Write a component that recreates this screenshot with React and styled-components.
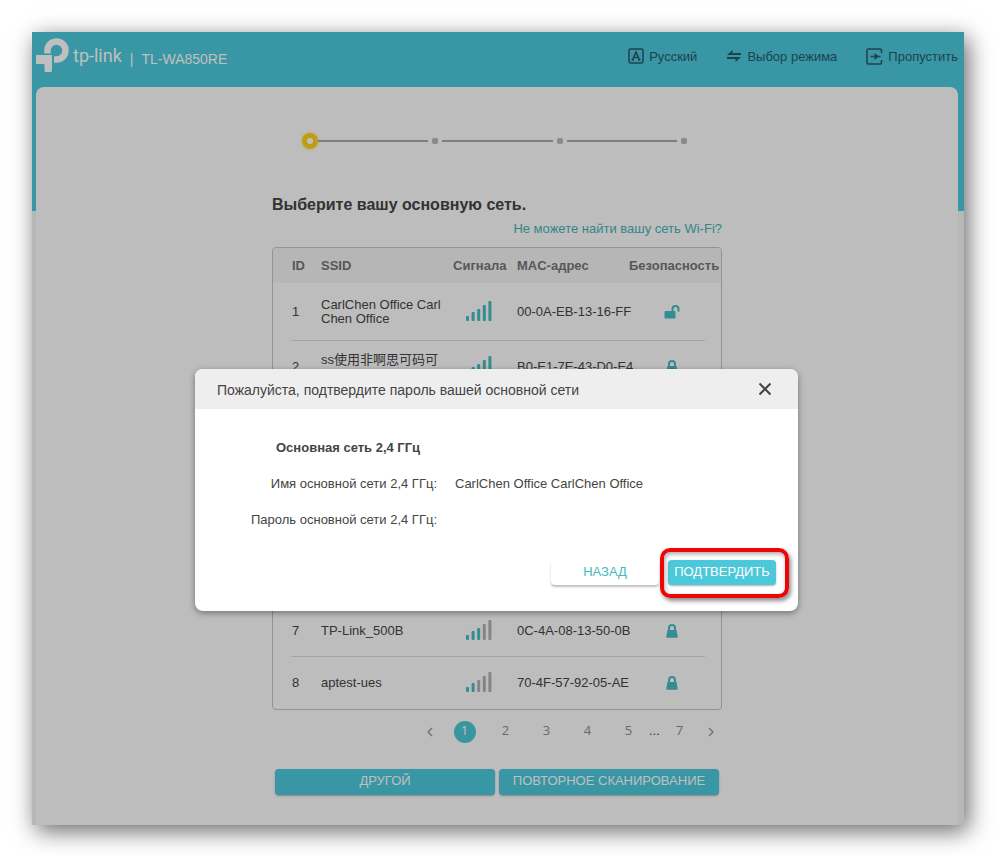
import React from 'react'
import styled, { createGlobalStyle } from 'styled-components'

const GlobalStyle = createGlobalStyle`
  * {
    box-sizing: border-box;
  }
  body {
    margin: 0;
    background: #fff;
    color: #444;
    font-family: 'Liberation Sans', Arial, 'Noto Sans CJK SC', sans-serif;
    font-size: 13px;
  }
`

const Page = styled.div`
  padding: 32px;
`

const Frame = styled.div`
  position: relative;
  padding: 0 6px 0 4px;
  background: linear-gradient(#4cc8db, #4cc8db) no-repeat top / 100% 179px #f3f4f5;
  box-shadow: 4px 6px 22px rgba(0, 0, 0, 0.6);
`

const Header = styled.header`
  display: flex;
  justify-content: space-between;
  height: 55px;
`

const Brand = styled.div`
  display: flex;
  align-items: flex-start;
  padding-top: 6px;
  color: #fff;
`

const BrandName = styled.span`
  margin-left: 3px;
  font-family: Roboto, 'Open Sans', sans-serif;
  font-size: 18px;
  line-height: 36px;
`

const Model = styled.span`
  margin-left: 8px;
  padding-top: 2px;
  font-size: 14px;
  line-height: 38px;
`

const Menu = styled.nav`
  display: flex;
  gap: 29px;
  height: 48px;
  align-items: center;
`

const MenuLink = styled.a`
  display: flex;
  align-items: center;
  gap: 5px;
  color: #285a68;
  text-decoration: none;
`

const Panel = styled.main`
  padding: 45px 16px 30px;
  border-radius: 8px 8px 0 0;
  background: #fcfcfc;
`

const Content = styled.div`
  max-width: 450px;
  margin: 0 auto;
`

const Steps = styled.div`
  display: flex;
  align-items: center;
  height: 18px;
  padding: 0 35px 0 30px;
`

const CurrentStep = styled.span`
  width: 16px;
  height: 16px;
  border: 5px solid #ffd21a;
  border-radius: 50%;
  background: #fff;
  box-shadow: 0 0 3px rgba(255, 210, 26, 0.7);
`

const Step = styled.span`
  width: 6px;
  height: 6px;
  margin: 0 4px;
  border-radius: 2px;
  background: #b8b8b8;

  &:last-child {
    margin-right: 0;
  }
`

const StepLine = styled.span`
  flex: 1;
  height: 2px;
  background: #a8a8a8;
`

const Title = styled.h1`
  margin: 45px 0 0;
  font-size: 16px;
  line-height: 20px;
`

const HelpLink = styled.a`
  display: block;
  margin: 5px 0 9px;
  color: #46b3b5;
  line-height: 18px;
  text-align: right;
  text-decoration: none;
`

const TableBox = styled.div`
  border: 1px solid #c4c4c4;
  border-radius: 4px;
  overflow: hidden;
`

const Table = styled.table`
  width: 100%;
  border-collapse: collapse;
  table-layout: fixed;
  line-height: 14px;
`

const HeadRow = styled.tr`
  height: 35px;
  background: #f3f3f3;
`

const Row = styled.tr`
  height: ${props => props.$height || 52}px;
  background: linear-gradient(#dcdcdc, #dcdcdc) no-repeat 18px 100% / calc(100% - 34px) 1px;

  &:last-child {
    background: none;
  }
`

const Th = styled.th`
  width: ${props => props.$width || 'auto'};
  padding: ${props => props.$padding || 0};
  color: #757575;
  text-align: left;
  white-space: nowrap;
`

const Td = styled.td`
  padding: ${props => props.$padding || 0};
  white-space: ${props => (props.$wrap ? 'normal' : 'nowrap')};

  svg {
    display: block;
    margin: 0 auto;
  }
`

const Pagination = styled.nav`
  display: flex;
  justify-content: flex-end;
  margin-top: 11px;
  height: 22px;
`

const PageButton = styled.button`
  width: ${props => props.$width || 41}px;
  padding: 0;
  border: none;
  background: none;
  color: #8c8c8c;
  font-family: 'Open Sans', 'Noto Sans', sans-serif;
  font-size: 13px;
  line-height: 18px;
  cursor: pointer;

  span {
    display: block;
    width: 22px;
    height: 22px;
    margin: 0 auto;
    border-radius: 50%;
    background: ${props => (props.$active ? '#4cc8d4' : 'none')};
    color: ${props => (props.$active ? '#fff' : 'inherit')};
  }
`

const Dots = styled.span`
  width: 10px;
  text-align: center;
  line-height: 20px;
`

const Actions = styled.div`
  display: flex;
  gap: 4px;
  margin-top: 26px;
  padding: 0 3px;
`

const Button = styled.button`
  flex: 1;
  height: 26px;
  padding: 0 0 4px;
  border: none;
  border-radius: 4px;
  background: #4cc8db;
  box-shadow: 0 1px 2px rgba(0, 0, 0, 0.3);
  color: #fff;
  font-family: inherit;
  font-size: 13px;
  cursor: pointer;
`

const Overlay = styled.div`
  position: absolute;
  inset: 0;
  padding: 337px 16px 0 13px;
  background: rgba(0, 0, 0, 0.25);
`

const Modal = styled.section`
  max-width: 603px;
  height: 242px;
  margin: 0 auto;
  border-radius: 8px;
  background: #fff;
  box-shadow: 0 2px 6px rgba(0, 0, 0, 0.4);
`

const ModalHeader = styled.header`
  display: flex;
  align-items: center;
  justify-content: space-between;
  height: 40px;
  padding: 0 26px 0 22px;
  border-radius: 8px 8px 0 0;
  background: #eee;
`

const ModalTitle = styled.h2`
  margin: 0;
  padding-top: 2px;
  font-size: 14px;
  font-weight: normal;
`

const CloseButton = styled.button`
  display: flex;
  padding: 0;
  border: none;
  background: none;
  cursor: pointer;
`

const NetworkTitle = styled.h3`
  margin: 0;
  padding: 30px 0 0 81px;
  font-size: 13px;
  line-height: 18px;
`

const Info = styled.dl`
  display: grid;
  grid-template-columns: 242px 1fr;
  column-gap: 18px;
  row-gap: 18px;
  margin: 18px 0 0;
  line-height: 18px;

  dt {
    text-align: right;
  }
  dd {
    margin: 0;
  }
`

const ModalActions = styled.div`
  display: flex;
  justify-content: flex-end;
  gap: 9px;
  margin-top: 31px;
  padding-right: 22px;
`

const ModalButton = styled(Button)`
  flex: none;
  width: 108px;
  height: 25px;
  padding-bottom: 2px;
`

const BackButton = styled(ModalButton)`
  background: #fff;
  box-shadow: 0 2px 2px rgba(0, 0, 0, 0.25);
  color: #46b9c0;
`

const Marked = styled.div`
  position: relative;
  display: flex;

  &::after {
    content: '';
    position: absolute;
    inset: -12px -13px -13px -8px;
    border: 4px solid #f00505;
    border-radius: 10px;
    box-shadow: 2px 3px 4px rgba(0, 0, 0, 0.45), inset 1px 2px 4px rgba(0, 0, 0, 0.35);
    pointer-events: none;
  }
`

const Logo = () => (
  <svg width="34" height="34" viewBox="0 0 34 34" fill="none">
    <path d="M11.5 15.5v-3a9 9 0 1 1 9 9h-2.500" stroke="#fff" strokeWidth="6.5" />
    <path d="M1 17h15v15.500a1.500 1.500 0 0 1-1.500 1.500H10a1.500 1.500 0 0 1-1.500-1.500V26H1a1 1 0 0 1-1-1v-7a1 1 0 0 1 1-1z" fill="#fff" />
  </svg>
)

const LanguageIcon = () => (
  <svg width="16" height="16" viewBox="0 0 16 16" fill="none" stroke="#285a68" strokeWidth="1.500">
    <rect x="1" y="1" width="14" height="14" rx="1.500" />
    <path d="M4.500 12 8 4l3.500 8M5.500 9.500h5M3.500 12h2.500M10 12h2.500" strokeWidth="1.600" />
  </svg>
)

const ModeIcon = () => (
  <svg width="16" height="14" viewBox="0 0 16 14" fill="none" stroke="#285a68" strokeWidth="1.800">
    <path d="M15 5H4M1 9h11" />
    <path d="M1 5.900 6.500 1v4.900zM15 8.100 9.500 13V8.100z" fill="#285a68" stroke="none" />
  </svg>
)

const SkipIcon = () => (
  <svg width="17" height="17" viewBox="0 0 17 17" fill="none" stroke="#285a68" strokeWidth="1.600">
    <path d="M15.500 5V2.500a1.500 1.500 0 0 0-1.500-1.500H2.500A1.500 1.500 0 0 0 1 2.500v12A1.500 1.500 0 0 0 2.500 16H14a1.500 1.500 0 0 0 1.500-1.500V12M4.500 8.500h10" />
    <path d="M8.500 5v7l4.500-3.500z" fill="#285a68" stroke="none" />
  </svg>
)

const Signal = ({ level }) => (
  <svg width="26" height="20" viewBox="0 0 26 20">
    {[5, 9, 12, 16, 20].map((height, i) => (
      <rect
        key={i}
        x={i * 5.6}
        y={20 - height}
        width="3"
        height={height}
        rx="1"
        fill={i < level ? '#46bcc0' : '#b1b1b1'}
      />
    ))}
  </svg>
)

const Lock = () => (
  <svg width="12" height="14" viewBox="0 0 12 14">
    <path d="M3 7V4a3 3 0 0 1 6 0v3" fill="none" stroke="#46bcc6" strokeWidth="2" />
    <path d="M1.500 6h9l1.200 6.500a1 1 0 0 1-1 1.200H1.300a1 1 0 0 1-1-1.200z" fill="#46bcc6" />
  </svg>
)

const Unlock = () => (
  <svg width="16" height="14" viewBox="0 0 16 14">
    <path d="M8.500 7V4a3 3 0 0 1 6 0v2.500" fill="none" stroke="#46bcc6" strokeWidth="2" />
    <rect x="0.500" y="6" width="11" height="7.500" rx="1" fill="#46bcc6" />
  </svg>
)

const Arrow = ({ d }) => (
  <svg width="6" height="10" viewBox="0 0 6 10" fill="none" stroke="#9c9c9c" strokeWidth="1.500">
    <path d={d} />
  </svg>
)

// empty entries are the rows that stay under the dialog
const networks = [
  { id: 1, ssid: 'CarlChen Office Carl Chen Office', signal: 5, mac: '00-0A-EB-13-16-FF', open: true, height: 58 },
  { id: 2, ssid: 'ss使用非啊思可码可', signal: 5, mac: 'B0-E1-7E-43-D0-E4', tall: true },
  { height: 56 },
  {},
  {},
  {},
  { id: 7, ssid: 'TP-Link_500B', signal: 3, mac: '0C-4A-08-13-50-0B' },
  { id: 8, ssid: 'aptest-ues', signal: 2, mac: '70-4F-57-92-05-AE' },
]

const pages = [1, 2, 3, 4, 5]

const App = () => {
  return (
    <Page>
      <GlobalStyle />
      <Frame>
        <Header>
          <Brand>
            <Logo />
            <BrandName>tp-link</BrandName>
            <Model>|</Model>
            <Model>TL-WA850RE</Model>
          </Brand>
          <Menu>
            <MenuLink href="#language"><LanguageIcon />Русский</MenuLink>
            <MenuLink href="#mode"><ModeIcon />Выбор режима</MenuLink>
            <MenuLink href="#skip"><SkipIcon />Пропустить</MenuLink>
          </Menu>
        </Header>
        <Panel>
          <Content>
            <Steps>
              <CurrentStep />
              <StepLine />
              <Step />
              <StepLine />
              <Step />
              <StepLine />
              <Step />
            </Steps>
            <Title>Выберите вашу основную сеть.</Title>
            <HelpLink href="#help">Не можете найти вашу сеть Wi-Fi?</HelpLink>
            <TableBox>
              <Table>
                <thead>
                  <HeadRow>
                    <Th $width="48px" $padding="0 0 0 19px">ID</Th>
                    <Th>SSID</Th>
                    <Th $width="64px">Сигнала</Th>
                    <Th $width="112px">MAC-адрес</Th>
                    <Th $width="92px">Безопасность</Th>
                  </HeadRow>
                </thead>
                <tbody>
                  {networks.map((network, i) => (
                    <Row key={i} $height={network.height}>
                      <Td $padding="0 0 0 19px">{network.id}</Td>
                      <Td $wrap $padding={network.tall ? '0 12px 14px 0' : '0 12px 0 0'}>{network.ssid}</Td>
                      <Td $padding="0 12px 2px 0">{network.signal && <Signal level={network.signal} />}</Td>
                      <Td>{network.mac}</Td>
                      <Td $padding="0 6px 0 0">{network.mac && (network.open ? <Unlock /> : <Lock />)}</Td>
                    </Row>
                  ))}
                </tbody>
              </Table>
            </TableBox>
            <Pagination>
              <PageButton $width={28} aria-label="Назад"><Arrow d="M5 1 1 5l4 4" /></PageButton>
              {pages.map(page => (
                <PageButton key={page} $active={page === 1}><span>{page}</span></PageButton>
              ))}
              <Dots>...</Dots>
              <PageButton><span>7</span></PageButton>
              <PageButton $width={22} aria-label="Вперед"><Arrow d="M1 1l4 4-4 4" /></PageButton>
            </Pagination>
            <Actions>
              <Button>ДРУГОЙ</Button>
              <Button>ПОВТОРНОЕ СКАНИРОВАНИЕ</Button>
            </Actions>
          </Content>
        </Panel>
        <Overlay>
          <Modal role="dialog">
            <ModalHeader>
              <ModalTitle>Пожалуйста, подтвердите пароль вашей основной сети</ModalTitle>
              <CloseButton aria-label="Закрыть">
                <svg width="14" height="14" viewBox="0 0 14 14" stroke="#444" strokeWidth="2">
                  <path d="M1.500 1.500l11 11M12.500 1.500l-11 11" />
                </svg>
              </CloseButton>
            </ModalHeader>
            <NetworkTitle>Основная сеть 2,4 ГГц</NetworkTitle>
            <Info>
              <dt>Имя основной сети 2,4 ГГц:</dt>
              <dd>CarlChen Office CarlChen Office</dd>
              <dt>Пароль основной сети 2,4 ГГц:</dt>
              <dd />
            </Info>
            <ModalActions>
              <BackButton>НАЗАД</BackButton>
              <Marked>
                <ModalButton>ПОДТВЕРДИТЬ</ModalButton>
              </Marked>
            </ModalActions>
          </Modal>
        </Overlay>
      </Frame>
    </Page>
  )
}

export default App
